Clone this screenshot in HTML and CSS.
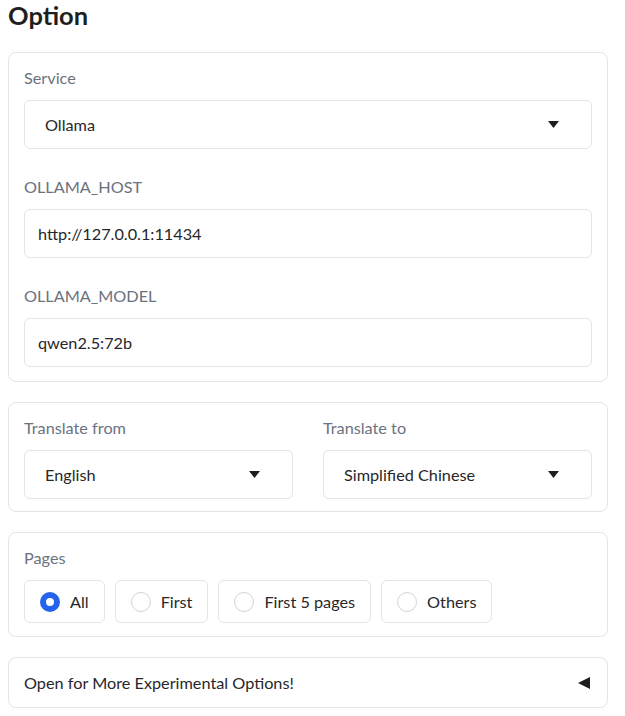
FILE: index.html
```html
<!DOCTYPE html>
<html lang="en">
<head>
<meta charset="utf-8">
<title>Option</title>
<link rel="stylesheet" href="styles.css">
</head>
<body>
<div class="page">
  <h2 class="title">Option</h2>

  <section class="block first">
    <div class="field">
      <div class="label">Service</div>
      <div class="select">
        <span class="value">Ollama</span>
        <svg class="caret" width="11" height="7" viewBox="0 0 11 7"><path d="M0 0H11L5.5 7Z" fill="#1f1f1f"/></svg>
      </div>
    </div>
    <div class="field">
      <div class="label">OLLAMA_HOST</div>
      <div class="input">http://127.0.0.1:11434</div>
    </div>
    <div class="field">
      <div class="label">OLLAMA_MODEL</div>
      <div class="input">qwen2.5:72b</div>
    </div>
  </section>

  <section class="block second">
    <div class="cols">
      <div class="field">
        <div class="label">Translate from</div>
        <div class="select">
          <span class="value">English</span>
          <svg class="caret" width="11" height="7" viewBox="0 0 11 7"><path d="M0 0H11L5.5 7Z" fill="#1f1f1f"/></svg>
        </div>
      </div>
      <div class="field">
        <div class="label">Translate to</div>
        <div class="select">
          <span class="value">Simplified Chinese</span>
          <svg class="caret" width="11" height="7" viewBox="0 0 11 7"><path d="M0 0H11L5.5 7Z" fill="#1f1f1f"/></svg>
        </div>
      </div>
    </div>
  </section>

  <section class="block">
    <div class="field">
      <div class="label">Pages</div>
      <div class="radios">
        <label class="radio"><span class="dot checked"></span><span>All</span></label>
        <label class="radio"><span class="dot"></span><span>First</span></label>
        <label class="radio"><span class="dot"></span><span>First 5 pages</span></label>
        <label class="radio"><span class="dot"></span><span>Others</span></label>
      </div>
    </div>
  </section>

  <section class="block accordion">
    <span>Open for More Experimental Options!</span>
    <svg class="arrow" width="12" height="12" viewBox="0 0 12 12"><path d="M12 0V12L0 6Z" fill="#1f1f1f"/></svg>
  </section>
</div>
</body>
</html>
```

FILE: styles.css
```css
html, body {
  margin: 0;
  padding: 0;
  background: #ffffff;
}

body {
  font-family: "Lato", "Liberation Sans", sans-serif;
  font-size: 16.25px;
  color: #27272a;
}

.page {
  width: 600px;
  padding: 0 0 0 8px;
}

.title {
  margin: 0;
  font-size: 25.5px;
  line-height: 30px;
  font-weight: 700;
  color: #1f1f1f;
  padding-bottom: 22px;
}

.block {
  border: 1px solid #e4e4e7;
  border-radius: 8px;
  padding: 14px 15px 13px;
  margin-bottom: 20px;
  display: flex;
  flex-direction: column;
  gap: 27px;
}

.block.first {
  padding-bottom: 14px;
}

.block.second {
  padding-bottom: 12px;
}

.field {
  display: flex;
  flex-direction: column;
  gap: 11px;
  min-width: 0;
}

.label {
  line-height: 22px;
  color: #6b7280;
}

.select,
.input {
  height: 49px;
  box-sizing: border-box;
  border: 1px solid #e4e4e7;
  border-radius: 6px;
  display: flex;
  align-items: center;
  line-height: 22px;
}

.select {
  padding: 0 32px 0 20px;
  justify-content: space-between;
}

.input {
  padding: 0 13px;
}

.cols {
  display: grid;
  grid-template-columns: 1fr 1fr;
  gap: 30px;
}

.radios {
  display: flex;
  gap: 10px;
}

.radio {
  display: flex;
  align-items: center;
  gap: 10px;
  padding: 10px 15px;
  line-height: 21px;
  border: 1px solid #e4e4e7;
  border-radius: 6px;
}

.dot {
  width: 20px;
  height: 20px;
  box-sizing: border-box;
  border-radius: 50%;
  border: 1px solid #d4d4d8;
  background: #fff;
}

.dot.checked {
  border: 6px solid #2463eb;
  background: #fff;
}

.accordion {
  flex-direction: row;
  justify-content: space-between;
  align-items: center;
  padding: 14px 17px 13px 15px;
  line-height: 22px;
}

.arrow {
  display: block;
}
```
